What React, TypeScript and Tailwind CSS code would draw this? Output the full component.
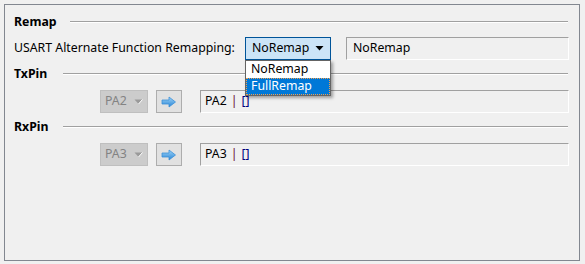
import React from "react";

const font = { fontFamily: '"Segoe UI", "Noto Sans", "Open Sans", sans-serif' };

function Header({ title, lineLeft }: { title: string; lineLeft: number }) {
  return (
    <div className="flex items-center h-[16px] pr-[11px]">
      <span className="font-bold text-[12.3px] text-black leading-none" style={{ width: lineLeft }}>
        {title}
      </span>
      <div className="flex-1 h-[2px] border-t border-[#a0a0a0] border-b-white border-b" />
    </div>
  );
}

function Arrow() {
  return (
    <svg width="16" height="12" viewBox="0 0 16 12">
      <defs>
        <linearGradient id="ag" x1="0" y1="0" x2="0" y2="1">
          <stop offset="0" stopColor="#9fd4f7" />
          <stop offset="1" stopColor="#2a86d6" />
        </linearGradient>
      </defs>
      <path d="M1 4 H8 V1 L14.5 6 L8 11 V8 H1 Z" fill="url(#ag)" stroke="#3b8fd8" strokeWidth="0.8" />
    </svg>
  );
}

function PinRow({ pin }: { pin: string }) {
  return (
    <div className="flex items-center h-[23px] pl-[86px] pr-[10px]">
      <div className="w-[48px] h-[23px] bg-[#cccccc] border border-[#bfbfbf] flex items-center justify-between px-[4px] text-[12.3px] text-[#838383]">
        <span>{pin}</span>
        <svg width="9" height="6" viewBox="0 0 9 6">
          <path d="M0.5 0.5 H8.5 L4.5 5 Z" fill="#9a9a9a" />
          <path d="M8.5 0.5 L4.5 5" stroke="#ffffff" strokeWidth="1" />
        </svg>
      </div>
      <div className="ml-[8px] w-[26px] h-[23px] border border-[#adadad] bg-[#e1e1e1] flex items-center justify-center">
        <Arrow />
      </div>
      <div className="ml-[18px] flex-1 h-[23px] border-t border-l border-[#a0a0a0] border-r-white border-b-white border-r border-b flex items-center pl-[4px] text-[12.3px] text-black">
        <span>{pin}</span>
        <span className="ml-[4px] text-[#6b0f3a]">|</span>
        <span className="ml-[4px] text-[#00007f]">[]</span>
      </div>
    </div>
  );
}

export default function App() {
  return (
    <div className="w-[585px] h-[264px] bg-[#f0f0f0] pt-[4px] pl-[4px]" style={font}>
      <div className="relative w-[576px] h-[257px] border border-[#828790] bg-[#f0f0f0] pl-[9px] pt-[9px]">
        <Header title="Remap" lineLeft={56} />
        <div className="flex items-center h-[23px] mt-[7px] pr-[10px]">
          <span className="text-[12.3px] text-black w-[231px]">USART Alternate Function Remapping:</span>
          <div className="w-[86px] h-[23px] bg-[#cce4f7] border border-[#005499] flex items-center justify-between pl-[6px] pr-[6px] text-[12.3px] text-black">
            <span>NoRemap</span>
            <svg width="9" height="5" viewBox="0 0 9 5">
              <path d="M0.5 0 H8.5 L4.5 4.5 Z" fill="#000" />
            </svg>
          </div>
          <div className="ml-[15px] flex-1 h-[23px] border-t border-l border-[#a0a0a0] border-r-white border-b-white border-r border-b flex items-center pl-[6px] text-[12.3px] text-black">
            NoRemap
          </div>
        </div>
        <div className="mt-[6px]">
          <Header title="TxPin" lineLeft={49} />
        </div>
        <div className="mt-[8px]">
          <PinRow pin="PA2" />
        </div>
        <div className="mt-[6px]">
          <Header title="RxPin" lineLeft={49} />
        </div>
        <div className="mt-[8px]">
          <PinRow pin="PA3" />
        </div>

        <div className="absolute left-[240px] top-[55px] w-[86px] h-[36px] bg-white border border-[#646464] shadow-[2px_2px_3px_rgba(0,0,0,0.35)] text-[12.3px]">
          <div className="h-[17px] flex items-center pl-[5px] text-black">NoRemap</div>
          <div className="h-[17px] flex items-center pl-[4px] bg-[#0078d7] text-white border border-dotted border-[#f0a050]">
            FullRemap
          </div>
        </div>
      </div>
    </div>
  );
}
